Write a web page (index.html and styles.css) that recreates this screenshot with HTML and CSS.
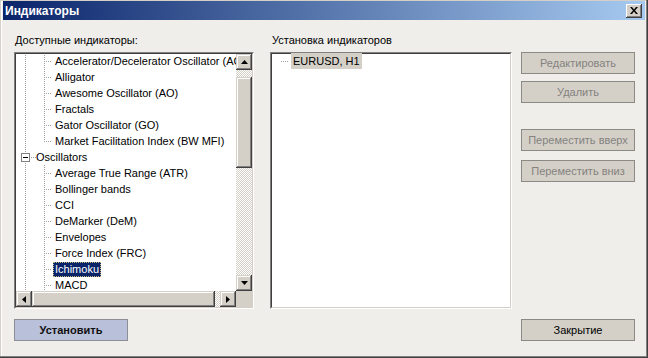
FILE: index.html
```html
<!DOCTYPE html>
<html lang="ru">
<head>
  <meta charset="UTF-8" />
  <title>Индикаторы</title>
  <link rel="stylesheet" href="styles.css">
</head>
<body>

  <div class="window">
    <div class="titlebar">
      <span class="title">Индикаторы</span>
      <span class="close">
        <svg width="8" height="7" viewBox="0 0 8 7"><path d="M0 0h2l2 2.5 2-2.5h2L5 3.5 8 7H6L4 4.5 2 7H0l3-3.5z" fill="#000"/></svg>
      </span>
    </div>

    <div class="content">
      <div class="col col-left">
        <div class="label">Доступные индикаторы:</div>
        <div class="sunken">
          <div class="sunken-in tree-box">
            <div class="tree-view">
              <div class="tree">
                <div class="group">
                  <div class="row leaf">Accelerator/Decelerator Oscillator (AC)</div>
                  <div class="row leaf">Alligator</div>
                  <div class="row leaf">Awesome Oscillator (AO)</div>
                  <div class="row leaf">Fractals</div>
                  <div class="row leaf">Gator Oscillator (GO)</div>
                  <div class="row leaf last">Market Facilitation Index (BW MFI)</div>
                </div>
                <div class="row parent"><span class="toggle"></span>Oscillators</div>
                <div class="group">
                  <div class="row leaf">Average True Range (ATR)</div>
                  <div class="row leaf">Bollinger bands</div>
                  <div class="row leaf">CCI</div>
                  <div class="row leaf">DeMarker (DeM)</div>
                  <div class="row leaf">Envelopes</div>
                  <div class="row leaf">Force Index (FRC)</div>
                  <div class="row leaf"><span class="sel">Ichimoku</span></div>
                  <div class="row leaf">MACD</div>
                </div>
              </div>
            </div>

            <div class="vscroll">
              <div class="sb-btn">
                <svg width="7" height="4" viewBox="0 0 7 4"><path d="M3.5 0L7 4H0z" fill="#000"/></svg>
              </div>
              <div class="track">
                <div class="thumb vthumb"></div>
              </div>
              <div class="sb-btn">
                <svg width="7" height="4" viewBox="0 0 7 4"><path d="M0 0h7L3.5 4z" fill="#000"/></svg>
              </div>
            </div>

            <div class="hscroll">
              <div class="sb-btn">
                <svg width="4" height="7" viewBox="0 0 4 7"><path d="M4 0v7L0 3.5z" fill="#000"/></svg>
              </div>
              <div class="track htrack">
                <div class="thumb hthumb"></div>
              </div>
              <div class="sb-btn">
                <svg width="4" height="7" viewBox="0 0 4 7"><path d="M0 0l4 3.5L0 7z" fill="#000"/></svg>
              </div>
            </div>

            <div class="corner"></div>
          </div>
        </div>
        <button class="btn primary">Установить</button>
      </div>

      <div class="col col-mid">
        <div class="label">Установка индикаторов</div>
        <div class="sunken">
          <div class="sunken-in list-box">
            <div class="inst-row"><span class="inst">EURUSD, H1</span></div>
          </div>
        </div>
      </div>

      <div class="col col-right">
        <button class="btn" disabled>Редактировать</button>
        <button class="btn btn-2" disabled>Удалить</button>
        <button class="btn btn-3" disabled>Переместить вверх</button>
        <button class="btn btn-4" disabled>Переместить вниз</button>
        <button class="btn btn-close">Закрытие</button>
      </div>
    </div>
  </div>

</body>
</html>
```

FILE: styles.css
```css
* {
  box-sizing: border-box;
}

body {
  margin: 0;
  font-family: "Liberation Sans", Arial, sans-serif;
  font-size: 11px;
  color: #000;
  background: #efeeea;
}

.window {
  width: 648px;
  height: 358px;
  padding: 1px 3px 3px 3px;
  background: #efeeea;
  box-shadow: inset -1px -1px #404040, inset -2px -2px #808080, inset 1px 1px #d4d0c8, inset 2px 2px #fff;
  display: flex;
  flex-direction: column;
}

.titlebar {
  height: 19px;
  display: flex;
  align-items: center;
  justify-content: space-between;
  padding: 0 3px 0 2px;
  background: linear-gradient(to right, #0a246a, #a6caf0);
}

.title {
  color: #fff;
  font-weight: bold;
  font-size: 12px;
}

.close {
  width: 16px;
  height: 14px;
  display: flex;
  align-items: center;
  justify-content: center;
  background: #d4d0c8;
  box-shadow: inset -1px -1px #404040, inset 1px 1px #fff, inset -2px -2px #808080;
}

.content {
  display: flex;
  padding: 12px 0 0 11px;
}

.col {
  display: flex;
  flex-direction: column;
}

.col-left {
  width: 240px;
}

.col-mid {
  width: 242px;
  margin-left: 16px;
}

.col-right {
  width: 114px;
  margin-left: 9px;
  padding-top: 20px;
}

.label {
  height: 20px;
  line-height: 16px;
  padding-left: 1px;
}

.col-mid .label {
  padding-left: 2px;
}

/* sunken frames */
.sunken {
  height: 257px;
  border: 1px solid;
  border-color: #808080 #fff #fff #808080;
}

.sunken-in {
  height: 100%;
  border: 1px solid;
  border-color: #404040 #d4d0c8 #d4d0c8 #404040;
  background: #fff;
}

.tree-box {
  display: grid;
  grid-template-columns: 1fr 16px;
  grid-template-rows: 1fr 16px;
}

.tree-view {
  overflow: hidden;
}

.tree {
  margin-top: -1px;
  background: repeating-linear-gradient(#a0a0a0 0 1px, transparent 1px 2px) 9px 0 / 1px 100% no-repeat;
}

.row {
  height: 16px;
  line-height: 16px;
  white-space: nowrap;
}

.leaf {
  padding-left: 39px;
  background:
    repeating-linear-gradient(to right, #a0a0a0 0 1px, transparent 1px 2px) 28px 8px / 8px 1px no-repeat,
    repeating-linear-gradient(#a0a0a0 0 1px, transparent 1px 2px) 28px 0 / 1px 100% no-repeat;
}

.leaf.last {
  background:
    repeating-linear-gradient(to right, #a0a0a0 0 1px, transparent 1px 2px) 28px 8px / 8px 1px no-repeat,
    repeating-linear-gradient(#a0a0a0 0 1px, transparent 1px 2px) 28px 0 / 1px 9px no-repeat;
}

.parent {
  display: flex;
  align-items: center;
  background: repeating-linear-gradient(to right, #a0a0a0 0 1px, transparent 1px 2px) 15px 8px / 5px 1px no-repeat;
}

.toggle {
  position: relative;
  width: 9px;
  height: 9px;
  margin: 0 6px 0 5px;
  border: 1px solid #808080;
  background: #fff;
}

.toggle::after {
  content: '';
  position: absolute;
  left: 1px;
  top: 3px;
  width: 5px;
  height: 1px;
  background: #000;
}

.sel {
  display: inline-block;
  height: 15px;
  line-height: 15px;
  margin-left: -2px;
  padding: 0 2px;
  background: #0a246a;
  color: #fff;
  outline: 1px dotted #c8b878;
  outline-offset: -1px;
}

/* scrollbars */
.vscroll {
  display: flex;
  flex-direction: column;
}

.hscroll {
  display: flex;
}

.sb-btn {
  width: 16px;
  height: 16px;
  flex: none;
  display: flex;
  align-items: center;
  justify-content: center;
  background: #d4d0c8;
  box-shadow: inset -1px -1px #404040, inset 1px 1px #d4d0c8, inset -2px -2px #808080, inset 2px 2px #fff;
}

.track {
  flex: 1;
  background: repeating-conic-gradient(#d4d0c8 0 25%, #fff 0 50%) 0 0 / 2px 2px;
}

.htrack {
  display: flex;
}

.thumb {
  background: #d4d0c8;
  box-shadow: inset -1px -1px #404040, inset 1px 1px #d4d0c8, inset -2px -2px #808080, inset 2px 2px #fff;
}

.vthumb {
  margin-top: 7px;
  height: 91px;
}

.hthumb {
  width: 183px;
  height: 16px;
}

.corner {
  background: #d4d0c8;
}

/* installed list */
.inst-row {
  height: 16px;
  line-height: 16px;
  padding-left: 19px;
  margin-top: -1px;
  background: repeating-linear-gradient(to right, #a0a0a0 0 1px, transparent 1px 2px) 9px 8px / 8px 1px no-repeat;
}

.inst {
  display: inline-block;
  padding: 0 2px;
  background: #d4d0c8;
}

/* buttons */
.btn {
  width: 114px;
  height: 22px;
  padding: 0;
  font-family: "Liberation Sans", Arial, sans-serif;
  font-size: 11px;
  color: #000;
  background: #d4d0c8;
  border: 1px solid #8c8a85;
}

.btn:disabled {
  color: #84827e;
}

.btn-2 {
  margin-top: 7px;
}

.btn-3 {
  margin-top: 26px;
}

.btn-4 {
  margin-top: 9px;
}

.btn-close {
  margin-top: auto;
}

.primary {
  margin-top: 10px;
  width: 114px;
  font-weight: bold;
  background: #b9c0d9;
  border-color: #8e8e96;
  color: #111;
}
```
